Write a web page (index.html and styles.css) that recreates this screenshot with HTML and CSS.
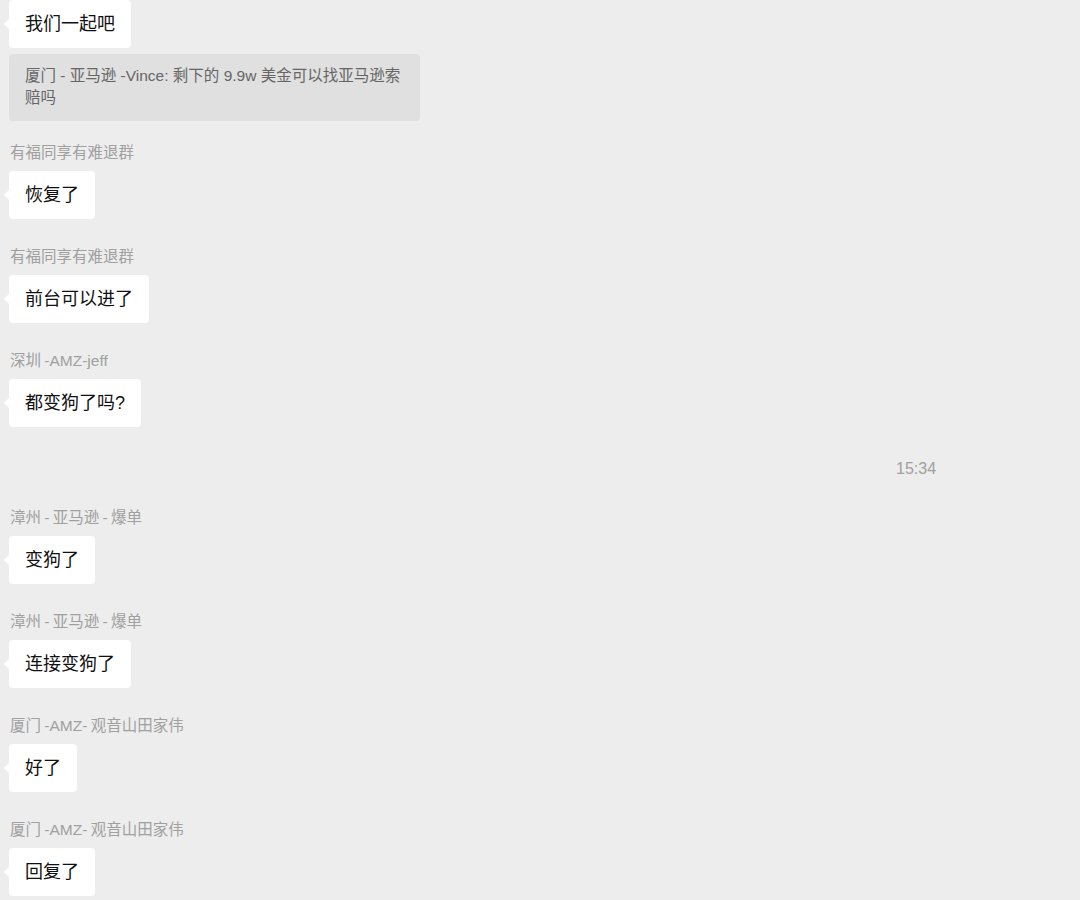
FILE: index.html
```html
<!DOCTYPE html>
<html lang="zh">
<head>
<meta charset="utf-8">
<link rel="stylesheet" href="styles.css">
</head>
<body>
<div class="chat">
  <div class="msg first">
    <div class="bubble">我们一起吧</div>
    <div class="quote">厦门 - 亚马逊 -Vince: 剩下的 9.9w 美金可以找亚马逊索赔吗</div>
  </div>
  <div class="msg after-quote">
    <div class="name">有福同享有难退群</div>
    <div class="bubble">恢复了</div>
  </div>
  <div class="msg">
    <div class="name">有福同享有难退群</div>
    <div class="bubble">前台可以进了</div>
  </div>
  <div class="msg">
    <div class="name">深圳 -AMZ-jeff</div>
    <div class="bubble">都变狗了吗?</div>
  </div>
  <div class="time">15:34</div>
  <div class="msg">
    <div class="name">漳州 - 亚马逊 - 爆单</div>
    <div class="bubble">变狗了</div>
  </div>
  <div class="msg">
    <div class="name">漳州 - 亚马逊 - 爆单</div>
    <div class="bubble">连接变狗了</div>
  </div>
  <div class="msg">
    <div class="name">厦门 -AMZ- 观音山田家伟</div>
    <div class="bubble">好了</div>
  </div>
  <div class="msg">
    <div class="name">厦门 -AMZ- 观音山田家伟</div>
    <div class="bubble">回复了</div>
  </div>
</div>
</body>
</html>
```
FILE: styles.css
```css
html, body {
  margin: 0;
  padding: 0;
  background: #ededed;
}
body {
  font-family: "Liberation Sans", "Noto Sans CJK SC", sans-serif;
  width: 1080px;
  height: 900px;
  overflow: hidden;
}
.chat {
  display: flex;
  flex-direction: column;
  padding: 0 0 0 9px;
}
.msg {
  display: flex;
  flex-direction: column;
  align-items: flex-start;
  margin-top: 28px;
}
.msg.first {
  margin-top: 0;
}
.msg.after-quote {
  margin-top: 22px;
}
.name {
  font-size: 15.5px;
  line-height: 20px;
  color: #a0a0a0;
  margin: 0 0 8px 1px;
  white-space: nowrap;
  word-spacing: -1px;
}
.bubble {
  position: relative;
  background: #ffffff;
  color: #111111;
  font-size: 18px;
  line-height: 24px;
  padding: 12px 16px;
  border-radius: 4px;
  white-space: nowrap;
}
.bubble::before {
  content: "";
  position: absolute;
  left: -5px;
  top: 19px;
  border-top: 5px solid transparent;
  border-bottom: 5px solid transparent;
  border-right: 5px solid #ffffff;
}
.quote {
  margin-top: 6px;
  box-sizing: border-box;
  width: 411px;
  background: #e0e0e0;
  color: #666666;
  font-size: 15.5px;
  line-height: 22px;
  padding: 11px 16px 12px;
  border-radius: 4px;
}
.time {
  margin-top: 32px;
  margin-bottom: 1px;
  padding-left: 887px;
  font-size: 16px;
  line-height: 20px;
  color: #a0a0a0;
}
```
